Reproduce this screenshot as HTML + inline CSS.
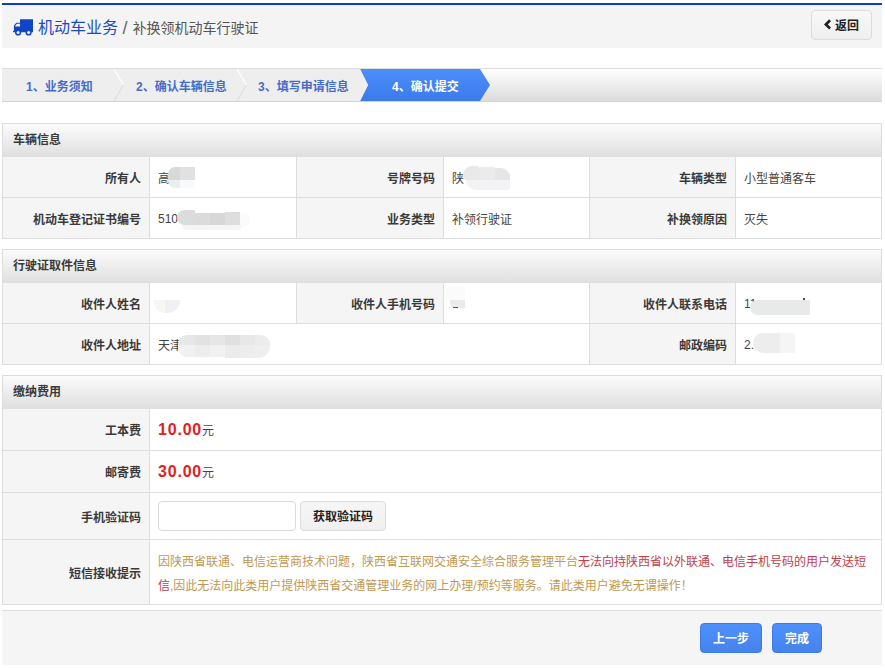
<!DOCTYPE html>
<html lang="zh-CN">
<head>
<meta charset="utf-8">
<title>补换领机动车行驶证</title>
<style>
*{box-sizing:border-box;margin:0;padding:0}
html,body{width:885px;height:668px;overflow:hidden;background:#fff}
body{font-family:"Liberation Sans","Noto Sans CJK SC",sans-serif;font-size:12px;color:#333;position:relative}
.abs{position:absolute}
/* header */
#hd{left:2px;top:3px;width:880px;height:45px;border-top:2px solid #0b3cc1;background:#f4f4f4}
#hd .ico{position:absolute;left:10px;top:13px;width:22px;height:18px}
#hd .t1{position:absolute;left:36px;top:0;height:43px;line-height:45px;font-size:16px;color:#1a4bc6;white-space:nowrap}
#hd .t2{font-size:14px;color:#555}
#back{position:absolute;left:809px;top:5px;width:61px;height:30px;border:1px solid #dcdcdc;border-radius:4px;background:linear-gradient(#f8f8f8,#efefef);font-weight:bold;color:#222;line-height:30px;white-space:nowrap}
#back svg{position:absolute;left:12px;top:8px;width:8px;height:12px}
#back span{position:absolute;left:23px;top:0}
/* steps */
#steps{left:2px;top:68px;width:880px;height:34px;border-top:1px solid #dcdcdc;border-bottom:1px solid #d4d4d4;background:linear-gradient(#fff,#dbdbdb)}
#steps svg{position:absolute;left:0;top:0;width:880px;height:32px}
#steps .s{position:absolute;top:0;height:32px;line-height:36px;font-weight:bold;color:#456cc9;white-space:nowrap}
#steps .s.on{color:#fff}
/* sections */
.sec{left:2px;width:880px;border:1px solid #ddd;border-bottom:0;background:#fff}
.sec .h{height:33px;line-height:32px;padding-left:10px;font-weight:bold;color:#3a3a3a;background:linear-gradient(#fbfbfb,#dfdfdf)}
table{border-collapse:separate;border-spacing:0;width:878px;table-layout:fixed}
td{height:41px;border-bottom:1px solid #ddd;border-right:1px solid #ddd;padding:0 8px;vertical-align:middle;color:#444;white-space:nowrap;position:relative}
td:last-child{border-right:0}
td.l{background:#f5f5f5;text-align:right;font-weight:bold;color:#3a3a3a}
td.n{padding-top:2px}
.mz{position:absolute;left:0;top:0}
.mz i{position:absolute;display:block}
.fee b{font-size:16px;color:#e02222;letter-spacing:.8px}
/* footer */
#ft{left:2px;top:610px;width:880px;height:55px;border-top:1px solid #ddd;background:#f5f5f5}
.btn{position:absolute;top:12px;height:30px;border:1px solid #3b7be8;border-radius:4px;background:linear-gradient(#4d90fe,#4683ea);color:#fff;font-weight:bold;text-align:center;line-height:30px}
</style>
</head>
<body>
<div id="hd" class="abs">
  <svg class="ico" viewBox="0 0 22 18"><path fill="#1046c6" d="M8 1.2h13v12.6h-13zM1.9 7.6l2.4-2.8h3.7v9h-6.1zM1 13h20v1.2h-20z"/><path fill="#f4f4f4" d="M3.3 7.5l1.6-1.8h3.1v2.9h-4.7z"/><circle cx="6.1" cy="14.4" r="3.1" fill="#1046c6"/><circle cx="16.6" cy="14.4" r="3.1" fill="#1046c6"/><circle cx="6.1" cy="14.4" r="1.5" fill="#f4f4f4"/><circle cx="16.6" cy="14.4" r="1.5" fill="#f4f4f4"/></svg>
  <div class="t1">机动车业务<span class="t2"><span style="letter-spacing:.6px"> <span style="font-size:18px;line-height:1;vertical-align:-1px;color:#666">/</span> </span>补换领机动车行驶证</span></div>
  <div id="back"><svg viewBox="0 0 8 12"><polygon points="0,5.4 5.1,0.3 7,2.2 3.8,5.4 7,8.6 5.1,10.5" fill="#222"/></svg><span>返回</span></div>
</div>

<div id="steps" class="abs">
  <svg viewBox="0 0 880 32">
    <defs><linearGradient id="gb" x1="0" y1="0" x2="0" y2="1"><stop offset="0" stop-color="#4c8efb"/><stop offset="1" stop-color="#3b7aec"/></linearGradient></defs>
    <rect x="0" y="0" width="366" height="32" fill="#eeeeee"/>
    <polygon points="358,0 478,0 488,16 478,32 358,32 366,16" fill="url(#gb)"/>
    <polygon points="358,0 366,16 358,32 350,32 350,0" fill="#eeeeee"/>
    <path d="M112 0L121.5 16" stroke="#fbfbfb" stroke-width="1.6" fill="none"/><path d="M121.5 16L112 32" stroke="#dedede" stroke-width="1.2" fill="none"/>
    <path d="M235 0L244.5 16" stroke="#fbfbfb" stroke-width="1.6" fill="none"/><path d="M244.5 16L235 32" stroke="#dedede" stroke-width="1.2" fill="none"/>
  </svg>
  <div class="s" style="left:24px">1、业务须知</div>
  <div class="s" style="left:134px">2、确认车辆信息</div>
  <div class="s" style="left:256px">3、填写申请信息</div>
  <div class="s on" style="left:390px">4、确认提交</div>
</div>

<div class="sec abs" style="top:123px">
  <div class="h">车辆信息</div>
  <table>
    <colgroup><col style="width:147px"><col style="width:147px"><col style="width:147px"><col style="width:146px"><col style="width:146px"><col style="width:145px"></colgroup>
    <tr><td class="l">所有人</td><td>高<span class="mz"><i style="left:18px;top:10px;width:12px;height:13px;background:#d9d9d9;border-radius:7px 0 0 0"></i><i style="left:30px;top:10px;width:15px;height:13px;background:#dfe1e2"></i><i style="left:18px;top:23px;width:12px;height:8px;background:#ededed;border-radius:0 0 0 7px"></i><i style="left:30px;top:23px;width:15px;height:8px;background:#f8fafc"></i></span></td><td class="l">号牌号码</td><td>陕<span class="mz"><i style="left:19px;top:9px;width:17px;height:14px;background:#e9e9e9;border-radius:9px 4px 0 4px"></i><i style="left:36px;top:10px;width:15px;height:13px;background:#ebebeb"></i><i style="left:51px;top:11px;width:15px;height:12px;background:#e6e6e6;border-radius:0 9px 0 0"></i><i style="left:22px;top:23px;width:44px;height:10px;background:#f3f3f5;border-radius:0 0 4px 14px"></i></span></td><td class="l">车辆类型</td><td>小型普通客车</td></tr>
    <tr><td class="l">机动车登记证书编号</td><td class="n">510<span class="mz"><i style="left:27px;top:12px;width:18px;height:15px;background:#dadcde;border-radius:9px 0 0 9px"></i><i style="left:45px;top:15px;width:15px;height:12px;background:#dbdbdb"></i><i style="left:60px;top:15px;width:15px;height:12px;background:#d7d7d7"></i><i style="left:75px;top:14px;width:15px;height:13px;background:#dedede"></i><i style="left:90px;top:15px;width:10px;height:14px;background:#fafbfd;border-radius:0 7px 7px 0"></i><i style="left:32px;top:27px;width:60px;height:5px;background:#f5f5f5;border-radius:0 0 8px 8px"></i></span></td><td class="l">业务类型</td><td>补领行驶证</td><td class="l">补换领原因</td><td>灭失</td></tr>
  </table>
</div>

<div class="sec abs" style="top:249px">
  <div class="h">行驶证取件信息</div>
  <table>
    <colgroup><col style="width:147px"><col style="width:147px"><col style="width:147px"><col style="width:146px"><col style="width:146px"><col style="width:145px"></colgroup>
    <tr><td class="l">收件人姓名</td><td><span class="mz"><i style="left:4px;top:17px;width:11px;height:13px;background:#f6f6f5;border-radius:0 0 0 11px"></i><i style="left:15px;top:17px;width:15px;height:13px;background:#eff0f3;border-radius:0 0 13px 0"></i></span></td><td class="l">收件人手机号码</td><td><span class="mz"><i style="left:1px;top:4px;width:20px;height:13px;background:#fbfbfb;border-radius:9px 0 0 9px"></i><i style="left:6px;top:17px;width:15px;height:8px;background:#ebebeb;border-radius:0 0 0 5px"></i><i style="left:9px;top:24px;width:5px;height:1px;background:#556"></i></span></td><td class="l">收件人联系电话</td><td class="n">11<span class="mz"><i style="left:14px;top:17px;width:60px;height:15px;background:#e8e9e9;border-radius:8px 0 0 8px"></i><i style="left:67px;top:15px;width:2px;height:2px;background:#446"></i></span></td></tr>
    <tr><td class="l">收件人地址</td><td colspan="3">天津<span class="mz"><i style="left:28px;top:11px;width:17px;height:10px;background:#e6e7e7;border-radius:9px 0 0 0"></i><i style="left:45px;top:11px;width:15px;height:10px;background:#e2e2e2"></i><i style="left:60px;top:11px;width:15px;height:10px;background:#e6e6e6"></i><i style="left:75px;top:11px;width:15px;height:10px;background:#e0e0e0"></i><i style="left:90px;top:11px;width:15px;height:10px;background:#e8e8e8"></i><i style="left:105px;top:11px;width:15px;height:10px;background:#ececec;border-radius:0 9px 0 0"></i><i style="left:28px;top:21px;width:17px;height:12px;background:#f1f1f1;border-radius:0 0 0 9px"></i><i style="left:45px;top:21px;width:15px;height:12px;background:#ededed"></i><i style="left:60px;top:21px;width:15px;height:12px;background:#f1f1f1"></i><i style="left:75px;top:21px;width:15px;height:13px;background:#ebebeb"></i><i style="left:90px;top:21px;width:15px;height:13px;background:#ededed"></i><i style="left:105px;top:21px;width:15px;height:13px;background:#efefef;border-radius:0 0 12px 0"></i></span></td><td class="l">邮政编码</td><td class="n">2.<span class="mz"><i style="left:17px;top:9px;width:27px;height:20px;background:#ededed;border-radius:10px 0 0 10px"></i><i style="left:44px;top:9px;width:15px;height:20px;background:#f5f5f5"></i></span></td></tr>
  </table>
</div>

<div class="sec abs" style="top:375px">
  <div class="h">缴纳费用</div>
  <table>
    <colgroup><col style="width:147px"><col></colgroup>
    <tr><td class="l" style="height:42px">工本费</td><td class="fee"><b>10.00</b>元</td></tr>
    <tr><td class="l" style="height:42px">邮寄费</td><td class="fee"><b>30.00</b>元</td></tr>
    <tr><td class="l" style="height:47px">手机验证码</td><td><div style="position:absolute;left:8px;top:8px;width:138px;height:30px;border:1px solid #dcdcdc;border-radius:4px;background:#fff"></div><div style="position:absolute;left:150px;top:8px;width:86px;height:30px;border:1px solid #dcdcdc;border-radius:4px;background:linear-gradient(#f6f6f6,#f0f0f0);font-weight:bold;color:#222;text-align:center;line-height:30px">获取验证码</div></td></tr>
    <tr><td class="l" style="height:65px">短信接收提示</td><td style="color:#c09853;line-height:24px;white-space:nowrap;padding-top:3px">因陕西省联通、电信运营商技术问题，陕西省互联网交通安全综合服务管理平台<span style="color:#c0404a">无法向持陕西省以外联通、电信手机号码的用户发送短<br>信</span>,因此无法向此类用户提供陕西省交通管理业务的网上办理/预约等服务。请此类用户避免无谓操作！</td></tr>
  </table>
</div>

<div id="ft" class="abs">
  <div class="btn" style="left:698px;width:62px">上一步</div>
  <div class="btn" style="left:770px;width:50px">完成</div>
</div>
</body>
</html>
